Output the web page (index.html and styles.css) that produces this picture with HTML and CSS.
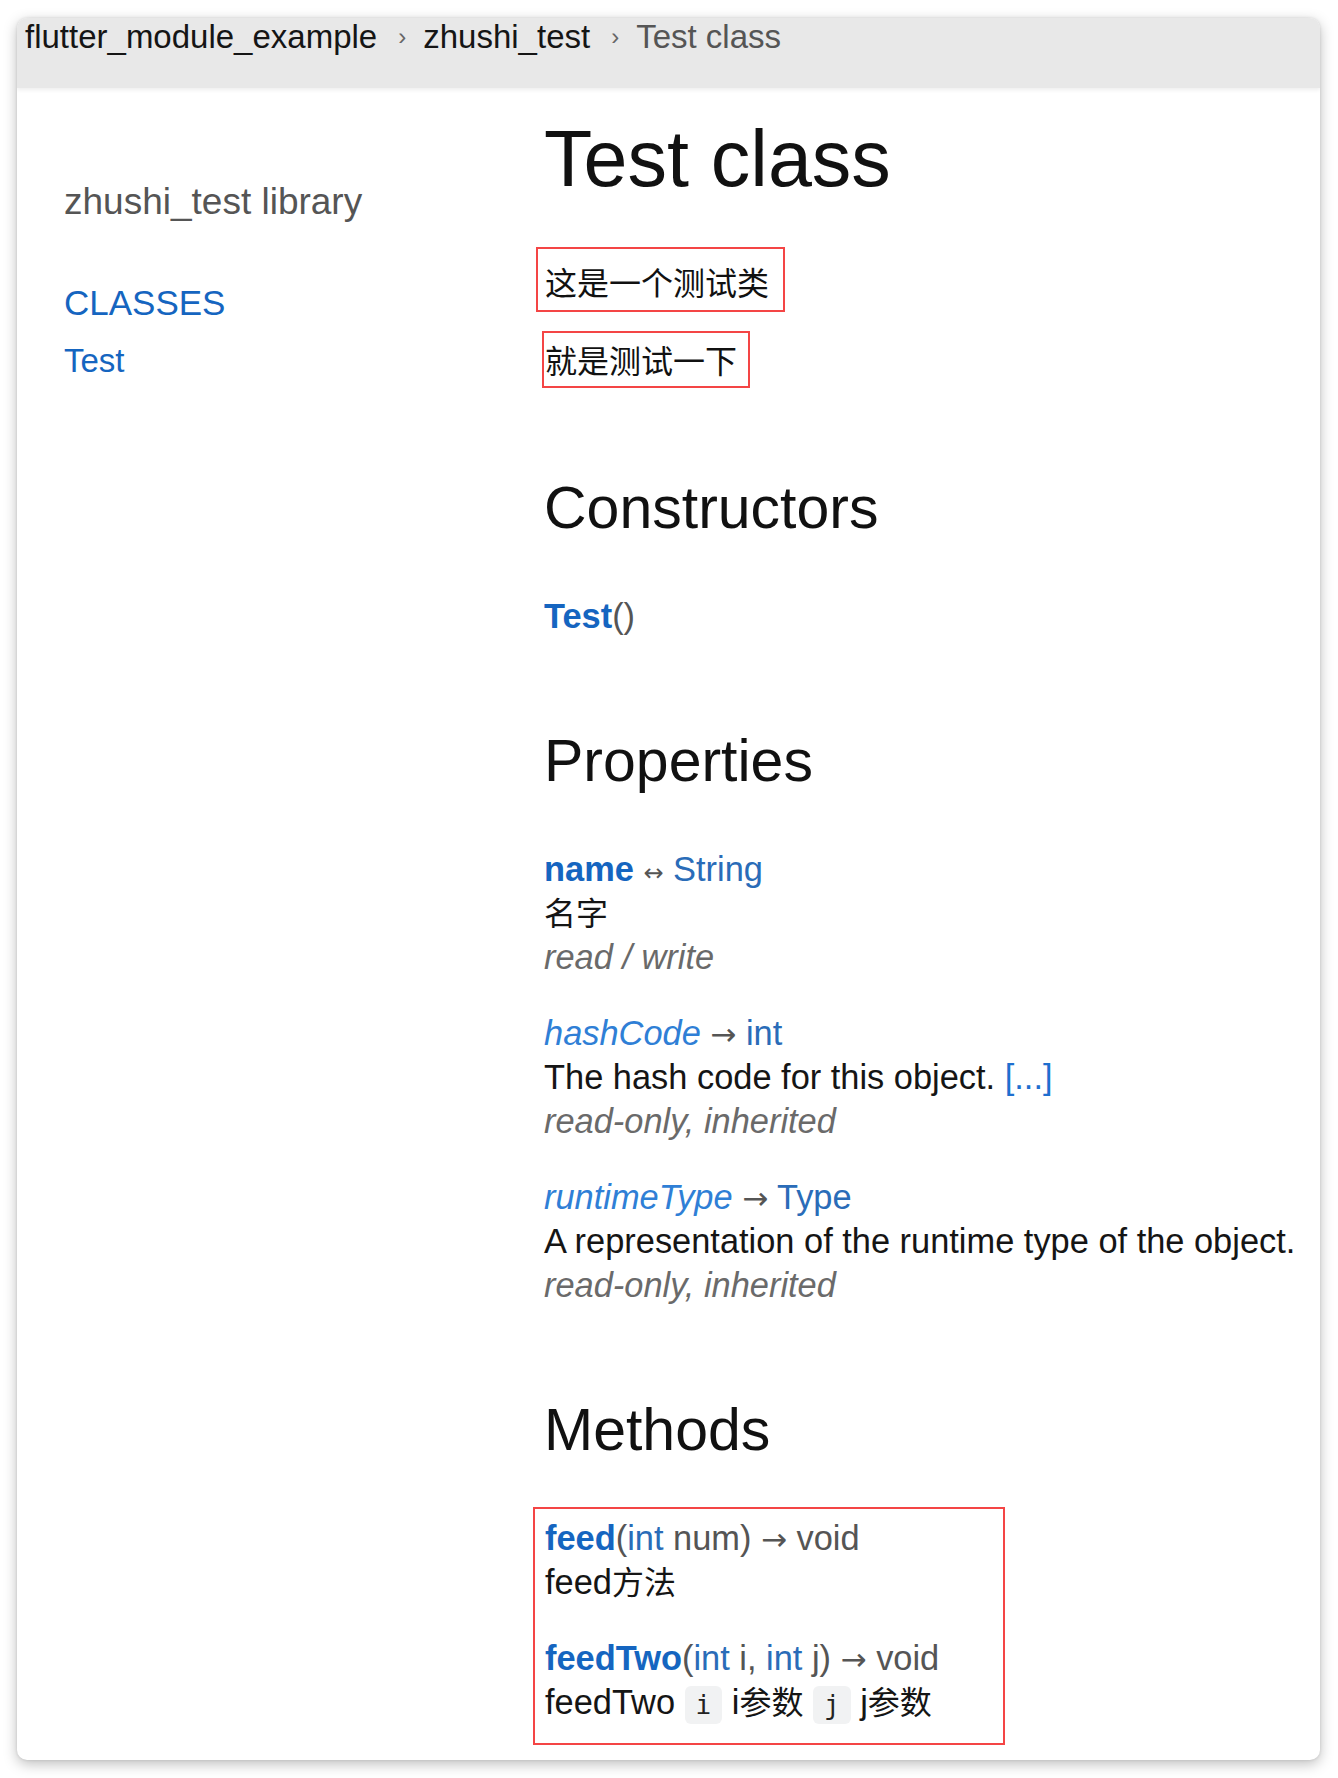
FILE: index.html
```html
<!DOCTYPE html>
<html lang="zh">
<head>
<meta charset="utf-8">
<title>Test class - zhushi_test library</title>
<link rel="stylesheet" href="styles.css">
</head>
<body>
<div class="window">
  <header class="topbar">
    <ol class="crumbs">
      <li class="crumb">flutter_module_example</li>
      <li class="sep">›</li>
      <li class="crumb">zhushi_test</li>
      <li class="sep">›</li>
      <li class="crumb current">Test class</li>
    </ol>
  </header>
  <div class="layout">
    <aside class="sidebar">
      <h5 class="lib-name">zhushi_test library</h5>
      <div class="side-section">CLASSES</div>
      <a class="side-link">Test</a>
    </aside>
    <main class="main">
      <h1 class="title">Test class</h1>
      <p class="mark mark-a"><span class="zh">这是一个测试类</span></p>
      <p class="mark mark-b"><span class="zh">就是测试一下</span></p>

      <h2 class="section first">Constructors</h2>
      <div class="entry">
        <div class="sig"><a class="name">Test</a><span class="muted">()</span></div>
      </div>

      <h2 class="section">Properties</h2>
      <div class="entry">
        <div class="sig"><a class="name">name</a> <span class="arrow small">↔</span> <a class="type">String</a></div>
        <div class="desc"><span class="zh">名字</span></div>
        <div class="feat">read / write</div>
      </div>
      <div class="entry">
        <div class="sig"><a class="name inherited">hashCode</a> <span class="arrow">→</span> <a class="type">int</a></div>
        <div class="desc">The hash code for this object. <a class="more">[...]</a></div>
        <div class="feat">read-only, inherited</div>
      </div>
      <div class="entry">
        <div class="sig"><a class="name inherited">runtimeType</a> <span class="arrow">→</span> <a class="type">Type</a></div>
        <div class="desc">A representation of the runtime type of the object.</div>
        <div class="feat">read-only, inherited</div>
      </div>

      <h2 class="section">Methods</h2>
      <div class="mark mark-c">
        <div class="entry">
          <div class="sig"><a class="name">feed</a><span class="muted">(</span><a class="type">int</a> <span class="muted">num)</span> <span class="arrow">→</span> <span class="muted">void</span></div>
          <div class="desc">feed<span class="zh">方法</span></div>
        </div>
        <div class="entry">
          <div class="sig"><a class="name">feedTwo</a><span class="muted">(</span><a class="type">int</a> <span class="muted">i,</span> <a class="type">int</a> <span class="muted">j)</span> <span class="arrow">→</span> <span class="muted">void</span></div>
          <div class="desc">feedTwo <code class="chip">i</code> i<span class="zh">参数</span> <code class="chip">j</code> j<span class="zh">参数</span></div>
        </div>
      </div>
    </main>
  </div>
</div>
</body>
</html>
```
FILE: styles.css
```css
* { box-sizing: border-box; }

html, body {
  margin: 0;
  padding: 0;
  background: #ffffff;
}

body {
  font-family: "Liberation Sans", "Noto Sans CJK SC", sans-serif;
  color: #111111;
  padding: 18px 18px 18px 17px;
}

.window {
  width: 1303px;
  height: 1742px;
  border-radius: 10px;
  overflow: hidden;
  background: #ffffff;
  box-shadow: 0 4px 14px rgba(0, 0, 0, 0.26), 0 0 3px rgba(0, 0, 0, 0.12);
}

.topbar {
  height: 70px;
  background: #e8e8e8;
  padding-left: 8px;
  box-shadow: 0 2px 4px rgba(0, 0, 0, 0.07);
  position: relative;
}

.crumbs {
  list-style: none;
  margin: 0;
  padding: 0;
  display: flex;
  align-items: center;
  height: 38px;
  font-size: 33px;
  line-height: 38px;
}

.crumb { color: #151515; }
.crumb.current { color: #555555; }

.sep {
  color: #666666;
  font-size: 24px;
  margin: 0 17px 0 21px;
}

.layout {
  display: grid;
  grid-template-columns: 527px 1fr;
}

.sidebar {
  padding-left: 47px;
  padding-top: 92px;
  display: flex;
  flex-direction: column;
  align-items: flex-start;
}

.lib-name {
  margin: 0;
  font-size: 37px;
  font-weight: normal;
  line-height: 44px;
  color: #555555;
}

.side-section {
  margin-top: 57px;
  font-size: 35px;
  line-height: 44px;
  color: #1565c0;
}

.side-link {
  margin-top: 14px;
  font-size: 33px;
  line-height: 44px;
  color: #1565c0;
}

.main {
  font-size: 34.4px;
  line-height: 44px;
}

.zh {
  font-family: "Noto Sans CJK SC", sans-serif;
  font-size: 32px;
  line-height: 1;
}

.title {
  margin: 26px 0 0;
  font-size: 79px;
  font-weight: normal;
  line-height: 90px;
  color: #111111;
}

.mark {
  border: 2px solid #f44545;
  margin: 0;
}

.mark-a {
  display: inline-block;
  margin-top: 43px;
  margin-left: -8px;
  padding: 12px 14px 5px 7px;
  line-height: 44px;
}

.mark-b {
  display: block;
  width: 208px;
  margin-top: 19px;
  margin-left: -2px;
  padding: 6px 11px 3px 1px;
  line-height: 44px;
}

.section {
  margin: 88px 0 0;
  font-size: 59px;
  font-weight: normal;
  line-height: 70px;
  color: #111111;
}

.section.first { margin-top: 85px; }

.section + .entry { margin-top: 51px; }

.entry + .entry { margin-top: 32px; }

.sig { color: #555555; }

.name {
  color: #1565c0;
  font-weight: bold;
}

.name.inherited {
  font-weight: normal;
  font-style: italic;
  color: #2f7fd6;
}

.type { color: #2a6cb8; }

.muted { color: #555555; }

.arrow {
  color: #555555;
  font-family: "DejaVu Sans", sans-serif;
  font-size: 31px;
  line-height: 1;
}
.arrow.small { font-size: 24px; }

.desc { color: #151515; }

.more { color: #1e6fcf; }

.feat {
  color: #6a6a6a;
  font-style: italic;
}

.mark-c {
  width: 472px;
  margin-top: 42px;
  margin-left: -11px;
  padding: 7px 8px 19px 10px;
}

.mark-c .entry:first-child { margin-top: 0; }
.mark-c .entry + .entry { margin-top: 32px; }

.chip {
  display: inline-block;
  font-family: "DejaVu Sans Mono", "Liberation Mono", monospace;
  font-size: 26px;
  line-height: 38px;
  padding: 0 11px;
  background: #f1f2f3;
  border-radius: 6px;
  color: #222222;
  vertical-align: middle;
}
```
